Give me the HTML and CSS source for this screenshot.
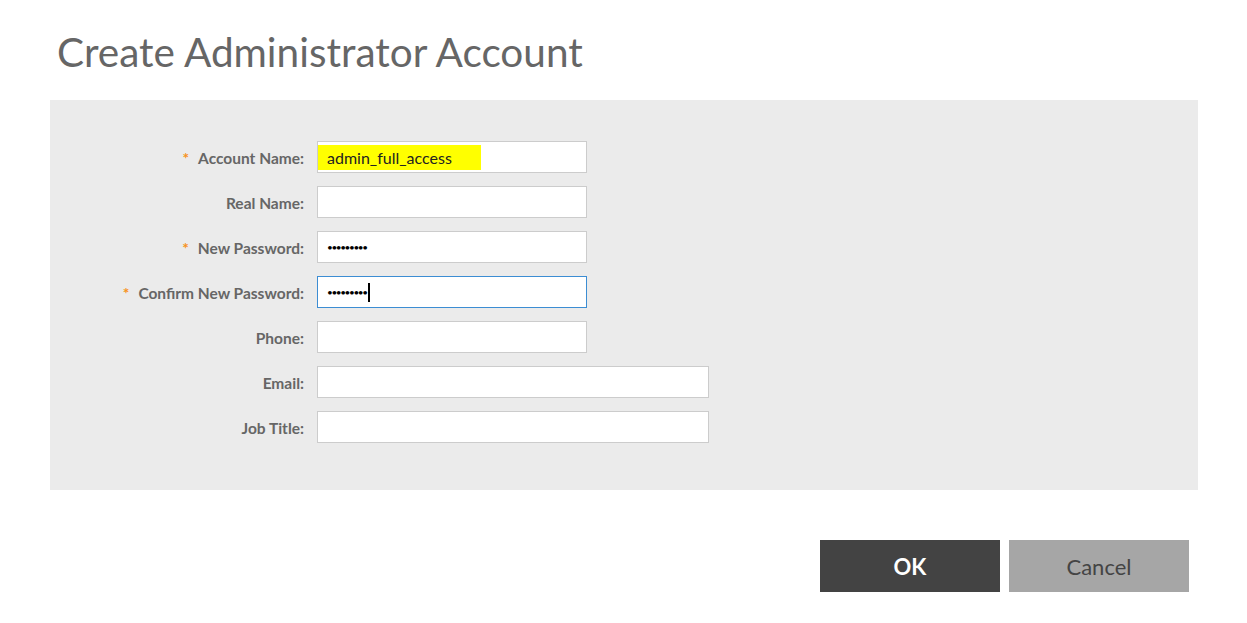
FILE: index.html
```html
<!DOCTYPE html>
<html lang="en">
<head>
    <meta charset="UTF-8">
    <title>Create Administrator Account</title>
    <link rel="stylesheet" href="styles.css">
</head>
<body>
    <div class="dialog">
        <h1 class="dialog-title">Create Administrator Account</h1>

        <div class="form-panel">
            <label class="field-label"><span class="req">*</span>Account Name:</label>
            <div class="field short">
                <span class="highlight">admin_full_access</span>
            </div>

            <label class="field-label">Real Name:</label>
            <div class="field short"></div>

            <label class="field-label"><span class="req">*</span>New Password:</label>
            <div class="field short"><span class="dots">•••••••••</span></div>

            <label class="field-label"><span class="req">*</span>Confirm New Password:</label>
            <div class="field short focused"><span class="dots">•••••••••</span><span class="caret"></span></div>

            <label class="field-label">Phone:</label>
            <div class="field short"></div>

            <label class="field-label">Email:</label>
            <div class="field long"></div>

            <label class="field-label">Job Title:</label>
            <div class="field long"></div>
        </div>

        <div class="actions">
            <button class="btn btn-ok">OK</button>
            <button class="btn btn-cancel">Cancel</button>
        </div>
    </div>
</body>
</html>
```

FILE: styles.css
```css
*, *:before, *:after {
    box-sizing: border-box;
}

body {
    margin: 0;
    background: #fff;
    font-family: 'Lato', 'Open Sans', sans-serif;
    color: #666;
}

.dialog {
    padding: 25px 49px 0 50px;
}

.dialog-title {
    margin: 0 0 21px 7px;
    font-size: 40.5px;
    font-weight: 400;
    line-height: 54px;
    color: #666;
}

.form-panel {
    display: grid;
    grid-template-columns: 254px auto;
    column-gap: 13px;
    row-gap: 13px;
    padding: 41px 0 47px 0;
    background: #ebebeb;
}

.field-label {
    display: flex;
    justify-content: flex-end;
    align-items: center;
    padding-top: 1px;
    font-size: 15.5px;
    font-weight: 700;
    color: #666;
}

.req {
    color: #f7931e;
    margin-right: 9px;
}

.field {
    display: flex;
    align-items: center;
    height: 32px;
    background: #fff;
    border: 1px solid #ccc;
    font-size: 16px;
    color: #222;
}

.field.short {
    width: 270px;
}

.field.long {
    width: 392px;
}

.field.focused {
    border-color: #3c8dd3;
}

.highlight {
    display: flex;
    align-items: center;
    height: 25px;
    width: 163px;
    padding-left: 9px;
    background: #ffff00;
    color: #222;
}

.dots {
    padding-left: 9px;
    color: #000;
    font-size: 10px;
    letter-spacing: -1.4px;
}

.caret {
    width: 2px;
    height: 19px;
    margin-left: 1px;
    background: #000;
}

.actions {
    display: flex;
    justify-content: flex-end;
    gap: 9px;
    margin-top: 50px;
    padding-right: 9px;
}

.btn {
    width: 180px;
    height: 52px;
    border: none;
    font-family: inherit;
    font-size: 22px;
    cursor: pointer;
}

.btn-ok {
    background: #434343;
    color: #fff;
    font-weight: 700;
}

.btn-cancel {
    background: #a6a6a6;
    color: #444;
    font-weight: 400;
}
```
